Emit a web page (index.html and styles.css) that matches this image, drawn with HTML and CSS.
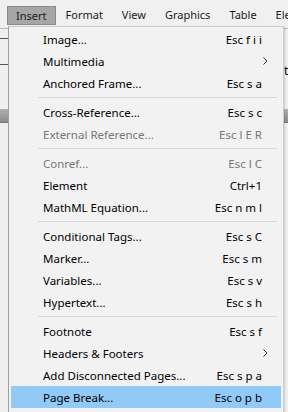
FILE: index.html
```html
<!DOCTYPE html>
<html>
<head>
<meta charset="utf-8">
<link rel="stylesheet" href="styles.css">
</head>
<body>
<div class="app">
  <div class="menubar">
    <div class="mb-item active">Insert</div>
    <div class="mb-item">Format</div>
    <div class="mb-item">View</div>
    <div class="mb-item">Graphics</div>
    <div class="mb-item">Table</div>
    <div class="mb-item">Element</div>
  </div>
  <div class="workspace">
    <div class="ws-line l1"></div>
    <div class="ws-line l2"></div>
    <div class="ws-bar"></div>
    <div class="ws-right">t</div>
  </div>
  <div class="menu">
    <div class="item"><span class="label">Image...</span><span class="key">Esc f i i</span></div>
    <div class="item"><span class="label">Multimedia</span><span class="arrow"><svg width="5" height="8" viewBox="0 0 5 8"><path d="M0.5 0.5 L4 4 L0.5 7.5" fill="none" stroke="#333" stroke-width="1"/></svg></span></div>
    <div class="item"><span class="label">Anchored Frame...</span><span class="key">Esc s a</span></div>
    <div class="sep"></div>
    <div class="item"><span class="label">Cross-Reference...</span><span class="key">Esc s c</span></div>
    <div class="item disabled"><span class="label">External Reference...</span><span class="key">Esc l E R</span></div>
    <div class="sep"></div>
    <div class="item disabled"><span class="label">Conref...</span><span class="key">Esc l C</span></div>
    <div class="item"><span class="label">Element</span><span class="key">Ctrl+1</span></div>
    <div class="item"><span class="label">MathML Equation...</span><span class="key">Esc n m l</span></div>
    <div class="sep"></div>
    <div class="item"><span class="label">Conditional Tags...</span><span class="key">Esc s C</span></div>
    <div class="item"><span class="label">Marker...</span><span class="key">Esc s m</span></div>
    <div class="item"><span class="label">Variables...</span><span class="key">Esc s v</span></div>
    <div class="item"><span class="label">Hypertext...</span><span class="key">Esc s h</span></div>
    <div class="sep"></div>
    <div class="item"><span class="label">Footnote</span><span class="key">Esc s f</span></div>
    <div class="item"><span class="label">Headers &amp; Footers</span><span class="arrow"><svg width="5" height="8" viewBox="0 0 5 8"><path d="M0.5 0.5 L4 4 L0.5 7.5" fill="none" stroke="#333" stroke-width="1"/></svg></span></div>
    <div class="item"><span class="label">Add Disconnected Pages...</span><span class="key">Esc s p a</span></div>
    <div class="item hover"><span class="label">Page Break...</span><span class="key">Esc o p b</span></div>
  </div>
</div>
</body>
</html>
```
FILE: styles.css
```css
html, body {
  margin: 0;
  padding: 0;
}
body {
  width: 288px;
  height: 412px;
  overflow: hidden;
  background: #f0f0f0;
  font-family: "Noto Sans", "Open Sans", sans-serif;
  font-size: 11.5px;
  color: #000;
}
.app {
  position: relative;
  width: 288px;
  height: 412px;
}
.menubar {
  display: flex;
  height: 29px;
  padding: 6px 0 0 7px;
  box-sizing: border-box;
  border-bottom: 1px solid #bdbdbd;
  white-space: nowrap;
  overflow: hidden;
  font-size: 11px;
}
.mb-item {
  height: 19px;
  line-height: 18px;
  padding: 0 9px;
  box-sizing: border-box;
  margin-right: 1px;
  color: #1a1a1a;
}
.mb-item.active {
  background: #a6a6a6;
  border: 1px solid #8a8a8a;
  padding: 0 8px;
}
.workspace {
  position: relative;
  height: 382px;
}
.ws-line {
  position: absolute;
  left: 0;
  width: 8px;
  height: 1px;
  background: #555;
}
.ws-line.l1 { top: 9px; }
.ws-line.l2 { top: 35px; }
.ws-bar {
  position: absolute;
  left: 0;
  top: 80px;
  width: 288px;
  height: 13px;
  background: linear-gradient(#b0b0b0, #8c8c8c);
  border-bottom: 1px solid #777;
}
.ws-right {
  position: absolute;
  left: 284px;
  top: 33px;
  font-size: 12px;
}
.menu {
  position: absolute;
  left: 8px;
  top: 26px;
  width: 276px;
  box-sizing: border-box;
  background: #f2f2f2;
  border: 1px solid #cccccc;
  border-left-color: #a0a0a0;
  padding: 1px 2px 4px 2px;
  box-shadow: 1px 1px 2px rgba(0,0,0,0.15);
}
.item {
  display: flex;
  align-items: center;
  height: 22px;
  padding: 0 19px 0 32px;
}
.item .label {
  flex: 1;
  white-space: nowrap;
}
.item .key {
  white-space: nowrap;
}
.item .arrow {
  display: flex;
  align-items: center;
  margin-right: -6px;
}
.item.disabled {
  color: #767676;
}
.item.hover {
  background: #91c9f7;
}
.sep {
  height: 1px;
  margin: 3px 4px 3px 27px;
  background: #d7d7d7;
}
```
